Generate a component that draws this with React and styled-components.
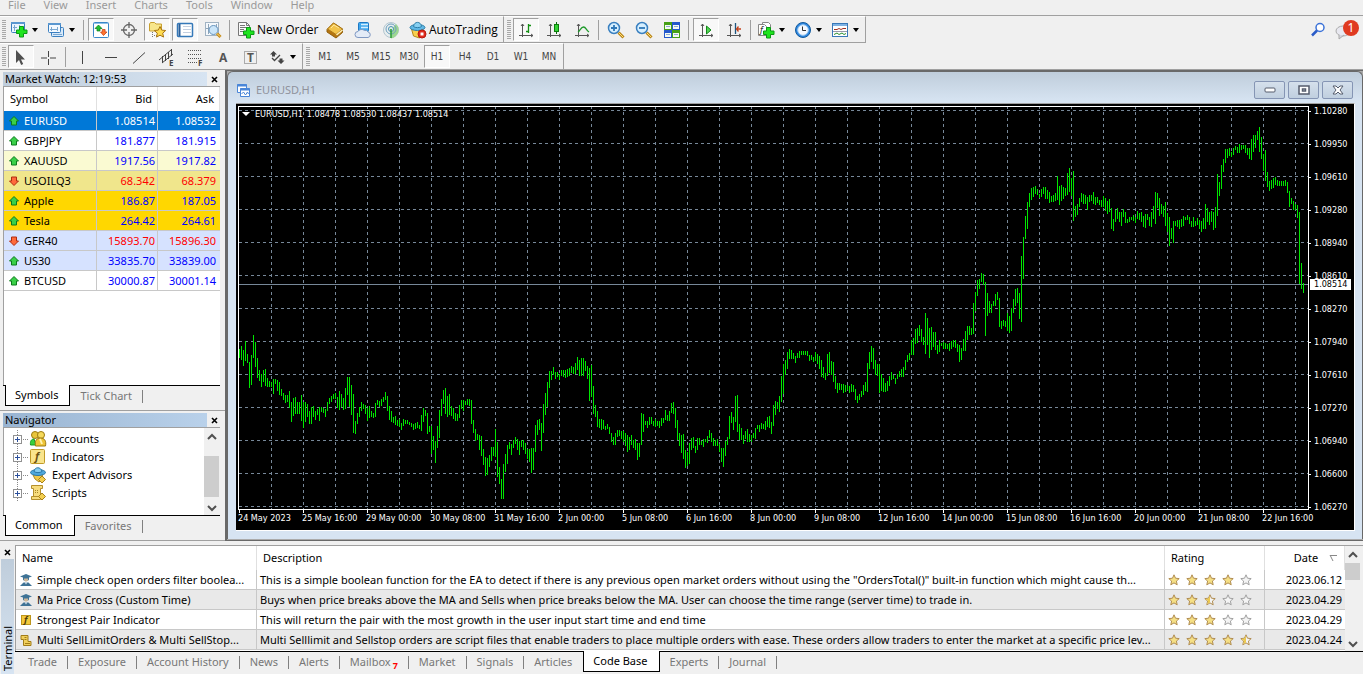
import styled, { createGlobalStyle, css } from "styled-components";

const GlobalStyle = createGlobalStyle`
  *{
    box-sizing: border-box;
  }

  body{
    margin: 0;
    background-color: #f0f0f0;
    color: #000;
    font-family: "Noto Sans", "Open Sans", sans-serif;
    font-size: 11px;
    line-height: 16px;
  }

  button{
    padding: 0;
    border: 0;
    background: none;
    color: inherit;
    font: inherit;
  }

  svg{
    display: block;
    flex: none;
  }
`;

const menus = ['File', 'View', 'Insert', 'Charts', 'Tools', 'Window', 'Help'];
const timeframes = ['M1', 'M5', 'M15', 'M30', 'H1', 'H4', 'D1', 'W1', 'MN'];

const quotes = [
  { symbol: 'EURUSD', bid: '1.08514', ask: '1.08532', up: true, bg: '#0078d7', selected: true },
  { symbol: 'GBPJPY', bid: '181.877', ask: '181.915', up: true, bg: '#ffffff' },
  { symbol: 'XAUUSD', bid: '1917.56', ask: '1917.82', up: true, bg: '#fafad2' },
  { symbol: 'USOILQ3', bid: '68.342', ask: '68.379', up: false, bg: '#f0e68c' },
  { symbol: 'Apple', bid: '186.87', ask: '187.05', up: true, bg: '#ffd700' },
  { symbol: 'Tesla', bid: '264.42', ask: '264.61', up: true, bg: '#ffd700' },
  { symbol: 'GER40', bid: '15893.70', ask: '15896.30', up: false, bg: '#d6e2ff' },
  { symbol: 'US30', bid: '33835.70', ask: '33839.00', up: true, bg: '#d6e2ff' },
  { symbol: 'BTCUSD', bid: '30000.87', ask: '30001.14', up: true, bg: '#ffffff' },
];

const scripts = [
  {
    icon: 'expert', name: 'Simple check open orders filter boolea...', rating: 4, date: '2023.06.12',
    description: 'This is a simple boolean function for the EA to detect if there is any previous open market orders without using the "OrdersTotal()" built-in function which might cause th...',
  },
  {
    icon: 'expert', name: 'Ma Price Cross (Custom Time)', rating: 2.5, date: '2023.04.29',
    description: 'Buys when price breaks above the MA and Sells when price breaks below the MA. User can choose the time range (server time) to trade in.',
  },
  {
    icon: 'indicator', name: 'Strongest Pair Indicator', rating: 3, date: '2023.04.29',
    description: 'This will return the pair with the most growth in the user input start time and end time',
  },
  {
    icon: 'script', name: 'Multi SellLimitOrders & Multi SellStop...', rating: 4.5, date: '2023.04.24',
    description: 'Multi Selllimit and Sellstop orders are script files that enable traders to place multiple orders with ease. These orders allow traders to enter the market at a specific price lev...',
  },
];

const terminalTabs = ['Trade', 'Exposure', 'Account History', 'News', 'Alerts', 'Mailbox', 'Market', 'Signals', 'Articles', 'Code Base', 'Experts', 'Journal'];

const prices = ['1.10280', '1.09950', '1.09610', '1.09280', '1.08940', '1.08610', '1.08270', '1.07940', '1.07610', '1.07270', '1.06940', '1.06600', '1.06270'];

const times = [
  '24 May 2023', '25 May 16:00', '29 May 00:00', '30 May 08:00', '31 May 16:00', '2 Jun 00:00',
  '5 Jun 08:00', '6 Jun 16:00', '8 Jun 00:00', '9 Jun 08:00', '12 Jun 16:00', '14 Jun 00:00',
  '15 Jun 08:00', '16 Jun 16:00', '20 Jun 00:00', '21 Jun 08:00', '22 Jun 16:00',
];

// high/low of every bar, three units to a pixel, counted down from the leg's base
const legs = [
  { base: 214, bars: `87,113 78,120 90,138 63,122 102,128 126,204 105,194 45,113 66,140 114,173 150,183 163,201 150,186 147,197 174,200 183,201
    186,201 177,222 177,192 180,213 186,225 207,228 219,240 225,249 225,246 213,263 246,305 234,288 231,282 246,282 246,282 225,303
    246,324 246,306 252,291 273,312 262,312 258,291 273,300 267,285 262,303 262,276 264,279 267,291 246,273 234,252 228,246 222,237
    219,237 231,264 213,270 222,261 234,270 204,267 171,225 171,261 195,285 222,339 303,342 279,312 261,291 246,273 252,267 255,282
    264,302 258,294 273,291 279,294 249,291 240,255 243,261 237,258 231,246 216,240 228,273 258,300 273,306 291,309 288,315 300,318
    297,321 309,330 297,318 300,312 300,312 306,315 309,321 312,330 309,327 306,324 315,327 285,333 264,306 270,288 279,342 318,336
    318,402 348,390 363,429 318,384 270,354 237,288 210,252 204,282 228,291 222,285 258,288 264,297 279,303 282,302 255,294 240,267
    240,273 243,255 237,255 237,258 240,312 300,339 327,363 342,360 345,390 348,408 387,435 411,468 414,465 405,441 381,423 381,408
    327,411 366,471 441,492 477,537 432,537 402,456 375,432 366,387 372,405 360,384 351,372 357,390 363,405 360,381 360,390 369,402
    387,417 387,426 384,459 384,450 315,396 300,345 297,330 309,393 252,339 219,285 186,261 153,204 153,180 141,165 156,177 156,171
    162,180 150,168 150,171 150,174 147,171 144,168 138,159 141,162 129,162 111,150 120,168 114,168 114,168 123,153 138,177 144,243
    135,231 198,282 255,291 273,321 297,324 297,330 300,327 318,330 312,327 321,342 339,366 351,375 339,375 330,351 330,348 333,357
    333,366 339,378 345,396 351,390 345,375 360,384 357,390 369,420 369,411 279,375 282,336 303,315 303,324 291,315 291,312 303,318
    297,321 303,318 303,324 294,318 294,309 270,300 285,303 273,303 249,279 246,282 264,324 300,360 339,378 345,400 342,417 390,444
    396,438 369,432 354,390 351,384 378,399 354,390 354,375 363,375 357,381 357,366 348,369 330,354 339,366 354,378 360,378 357,378
    372,396 384,426 384,441 363,408 351,375 288,357 276,309 291,330 228,306 225,336 312,360 324,360 345,372 333,357 327,366 342,366
    345,366 339,354 324,357 315,327 315,336 309,327 312,327 303,330 291,321 288,324 306,342 255,318 243,285 246,267 228,276 168,246
    132,222 120,165 96,147 87,117 90,117 99,117 108,129 99,114 93,114 93,105 93,105 93,105 93,108 105,123 105,120 111,126
    96,123 102,132 108,147 120,171 141,174 159,180 102,168 96,159 123,165 126,186 168,207 189,219 189,210 192,210 192,219 195,216
    195,210 198,219 192,216 195,216 207,240 228,249 222,240 213,231 195,225 186,213 129,216 96,147 78,126 84,147 120,165 132,168
    132,219 162,213 174,216 189,216 183,213 168,198 156,180 165,177 174,192 162,177 153,171 147,171 141,171 120,150 105,126 99,120` },
  { base: 144, bars: `270,315 264,315 237,282 234,279 225,258 237,276 261,285 189,312 204,285 234,324 231,300 246,291 246,300 285,312 270,306 279,288
    276,297 279,297 282,297 279,303 273,297 270,291 270,294 282,306 285,336 294,330 267,303 243,303 228,270 228,255 234,255 159,252
    126,183 90,138 87,117 69,96 72,105 96,258 129,198 153,189 162,189 153,168 132,168 126,150 144,231 213,237 210,228 213,231
    189,243 198,249 174,243 147,189 117,168 114,159 129,207 18,216` },
  { base: -2, bars: `399,525 336,405 294,375 267,309 252,288 249,279 246,270 255,273 270,282 255,279 249,270 249,285 258,285 264,297 276,294 273,294
    267,291 216,288 246,303 243,291 249,285 252,276 207,273 192,264 222,276 201,351 306,339 300,333 282,309 267,294 270,300 273,300
    279,318 273,294 273,291 264,300 279,303 279,297 288,303 288,309 276,309 282,321 291,330 285,324 312,375 345,381 318,354 312,345
    324,354 324,366 315,339 324,357 345,357 339,354 339,348 333,351 339,357 321,345 327,348 324,354 336,369 330,372 330,348 339,366
    324,369 306,345 264,360 267,312 282,336 300,330 306,339 294,366 327,384 339,426 372,405 351,417 351,366 348,369 348,375 345,369
    336,366 339,348 333,348 339,360 351,369 339,369 351,366 342,363 348,375 351,384 342,375 300,375 312,354 324,363 321,354 324,378
    309,372 210,336 234,276 183,255 165,204 135,177 135,162 132,156 144,159 132,153 126,138 129,147 120,147 123,138 123,135 123,147
    132,153 132,165 105,168 93,144 93,132 81,108 69,144 99,165 150,201 138,231 204,249 231,261 228,255 222,252 219,243 228,246
    231,246 231,246 231,246 228,246 234,267 261,309 282,300 291,318 300,318 303,342 324,540 477,555 537,567` },
];

const barPath = legs
  .flatMap(({ base, bars }) => bars.trim().split(/\s+/).map(pair => pair.split(',').map(v => base + Math.round(v / 3))))
  .map(([high, low], i) => `M${i * 2 + 1} ${high}h1V${low}h-1z`)
  .join('');

const gridColumns = times.flatMap((_, i) => [33 + i * 64, 65 + i * 64]);

const Svg = ({ size = 18, children, ...rest }) => (
  <svg width={size} height={size} viewBox={`0 0 ${size} ${size}`} fill="none" aria-hidden="true" {...rest}>{children}</svg>
);

const GreenPlus = ({ x, y }) => (
  <path transform={`translate(${x} ${y})`} d="M3.500.5h4v3.500h3.500v3.500H7.500v3.500h-4V7.500H.5V4h3z" fill="#1fe41f" stroke="#0a9a14" />
);

const Axes = () => (
  <path d="M5.500 3v13M2 14.500h14M4 5l1.500-2L7 5M14 13l2 1.500-2 1.500" stroke="#555" />
);

const icons = {
  newChart: (
    <>
      <rect x="1.500" y="1.500" width="13" height="10" rx="1" fill="#eaf4ff" stroke="#3a7fc0" />
      <path d="M1 2h14" stroke="#5a97d0" strokeWidth="2" />
      <path d="M4.500 4v6M3 6.500h4M9.500 4v3" stroke="#7aa7d0" />
      <GreenPlus x={6} y={5} />
    </>
  ),
  profiles: (
    <>
      <rect x="4.500" y="6.500" width="12" height="9" rx="1" fill="#d8eafa" stroke="#3a7fc0" />
      <rect x="1.500" y="2.500" width="12" height="9" rx="1" fill="#f3f9ff" stroke="#3a7fc0" />
      <path d="M1 3h13" stroke="#5a97d0" strokeWidth="2" />
      <path d="M4.500 6v4M3 8.500h8M10.500 6v4" stroke="#7aa7d0" />
      <path d="M6 13.500h9" stroke="#7aa7d0" />
    </>
  ),
  marketWatch: (
    <>
      <rect x="1.500" y="1.500" width="15" height="15" rx="1" fill="#fff" stroke="#3a86c8" />
      <path d="M2 2.500h14" stroke="#8fc0ea" />
      <path d="M6.500 4L10 7.500H8V10H5V7.500H3z" fill="#22c032" stroke="#0a7a1a" strokeWidth=".7" />
      <path d="M11.500 14.500L8.500 11h1.800V8.500h2.800V11H15z" fill="#ff7430" stroke="#c03a10" strokeWidth=".7" />
    </>
  ),
  crosshair: (
    <>
      <circle cx="9" cy="9" r="5.500" stroke="#666" strokeWidth="1.300" />
      <path d="M9 1v6M9 11v6M1 9h6M11 9h6" stroke="#666" strokeWidth="1.300" />
    </>
  ),
  navigator: (
    <>
      <path d="M1.500 3l1-1.500h4L8 3h5.500v7h-12z" fill="#f8e68c" stroke="#c8a030" />
      <path d="M4.500 11v6M6 14.500h3" stroke="#777" strokeDasharray="1 1" />
      <path d="M12 5.500l1.700 3.600 4 .4-3 2.700.9 3.900L12 14.200 8.500 16.100l.8-3.900-3-2.700 4-.4z" fill="#ffdc50" stroke="#a87412" />
    </>
  ),
  terminal: (
    <>
      <rect x="1.500" y="2.500" width="15" height="13" rx="1" fill="#fff" stroke="#3478b8" strokeWidth="1.500" />
      <path d="M3.500 3v12" stroke="#2a5e98" strokeWidth="2" />
      <path d="M7 5.500h8M7 8.500h8M7 11.500h8" stroke="#c3cfe0" />
    </>
  ),
  tester: (
    <>
      <rect x="1.500" y="1.500" width="13" height="13" fill="#f4f8fc" stroke="#a0b2c2" />
      <path d="M4.500 3v10M2 7.500h4M12.500 3v4" stroke="#8fa5b8" />
      <circle cx="9.500" cy="9" r="4.500" fill="#bfe0f8" fillOpacity=".8" stroke="#6593bd" />
      <path d="M13 12.500l3.500 3.500" stroke="#c58a18" strokeWidth="3" />
      <path d="M13 12.500l3 3" stroke="#ffe07a" />
    </>
  ),
  newOrder: (
    <>
      <path d="M1.500 1.500h8l3 3v10h-11z" fill="#fafafa" stroke="#777" />
      <path d="M9.500 1.500v3h3M3 4.500h5M3 6.500h7M3 8.500h4M3 10.500h3" stroke="#777" />
      <GreenPlus x={6} y={6} />
    </>
  ),
  metaEditor: (
    <>
      <path d="M1 8.500L7.500 2 16.500 8v3.500L10 17 1 11z" fill="#b57510" stroke="#91600c" />
      <path d="M1.500 8L7.500 2l9 6-6.500 5.500z" fill="#f2c44c" stroke="#ad7818" />
      <path d="M10.500 14l6-5" stroke="#fff1b8" strokeWidth="1.500" />
      <path d="M5 7l3-3 5 3" stroke="#ffe69a" />
    </>
  ),
  hosting: (
    <>
      <rect x="4.500" y="1.500" width="10" height="9" rx="1" fill="#3fa8ee" stroke="#1e78c4" />
      <path d="M7 3.500h7M7 6.500h7" stroke="#d5eeff" strokeWidth="1.500" />
      <path d="M4 16.500a3 3 0 0 1 0-6 4 3.500 0 0 1 6.500-1 3 3 0 0 1 3.500 1.500 2.800 2.800 0 0 1 0 5.500z" fill="#e3ebf7" stroke="#7f98c2" />
    </>
  ),
  signals: (
    <>
      <circle cx="9" cy="9" r="7.500" fill="#e8eeee" stroke="#b4c6d0" />
      <path d="M9 9v8.500a8 8 0 0 0 5-2.500 8 8 0 0 0 0-12z" fill="#9cd692" />
      <circle cx="9" cy="8" r="5" stroke="#6e9fc0" />
      <circle cx="9" cy="8" r="2.500" fill="#d8f0e0" stroke="#4f8fb8" />
      <path d="M9 8v9" stroke="#2f9e3a" strokeWidth="1.600" />
    </>
  ),
  autoTrading: (
    <>
      <path d="M2.500 8l2 7 6 2 5-6-2-3z" fill="#f7cf4d" stroke="#b58718" />
      <ellipse cx="8.500" cy="6.500" rx="7.500" ry="3" fill="#5fb8e6" stroke="#2b7da8" />
      <path d="M4.500 5.500C5 0 12 0 12.500 5.500 11 7 6 7 4.500 5.500z" fill="#87d0f2" stroke="#2b7da8" />
      <circle cx="13" cy="13" r="4" fill="#e02a1c" stroke="#b9180c" />
      <path d="M11.500 11.500h3v3h-3z" fill="#fff" />
    </>
  ),
  bars: <><Axes /><path d="M11.500 3v9M11.500 4.500H14M9 10.500h2.500" stroke="#149014" strokeWidth="1.300" /></>,
  candles: <><Axes /><path d="M11.500 1v12" stroke="#0c6c0c" /><rect x="9.500" y="3.500" width="4" height="7" fill="#34d334" stroke="#0c7c0c" /></>,
  line: <><Axes /><path d="M5 11c2-1 3-5 5.500-5S13 9 16 11" stroke="#1e9a2a" strokeWidth="1.300" /></>,
  zoomIn: (
    <>
      <path d="M11.500 11.500l5 5" stroke="#b98518" strokeWidth="3" />
      <path d="M12 12l4 4" stroke="#ffe27a" />
      <circle cx="7" cy="7" r="5.500" fill="#d6efff" stroke="#3a80c0" strokeWidth="1.500" />
      <path d="M4 7h6M7 4v6" stroke="#2f78b8" strokeWidth="1.800" />
    </>
  ),
  zoomOut: (
    <>
      <path d="M11.500 11.500l5 5" stroke="#b98518" strokeWidth="3" />
      <path d="M12 12l4 4" stroke="#ffe27a" />
      <circle cx="7" cy="7" r="5.500" fill="#d6efff" stroke="#3a80c0" strokeWidth="1.500" />
      <path d="M4 7h6" stroke="#2f78b8" strokeWidth="1.800" />
    </>
  ),
  tile: (
    <>
      <path d="M1 1h8v8H1zM9 9h8v8H9z" fill="#46a016" />
      <path d="M9 1h8v8H9zM1 9h8v8H1z" fill="#2458cc" />
      <path d="M2 4h6v4H2zM10 4h6v4h-6zM2 12h6v4H2zM10 12h6v4h-6z" fill="#f4faf2" />
      <path d="M3 5.500h4M11 5.500h4M3 13.500h4M11 13.500h4" stroke="#8fa9d0" />
    </>
  ),
  autoScroll: <><Axes /><path d="M9.500 5v8l4.500-4z" fill="#52d452" stroke="#128a1a" /></>,
  chartShift: <><Axes /><path d="M10.500 2v11" stroke="#1c5680" strokeWidth="1.300" /><path d="M16 8h-4M13.500 5.500L11.500 8l2 2.500" stroke="#c4421c" strokeWidth="1.300" /></>,
  indicators: (
    <>
      <path d="M5.500 1.500h6l2 2v9h-8z" fill="#fff" stroke="#888" />
      <path d="M1.500 3.500h6l2 2v9h-8z" fill="#fff" stroke="#888" />
      <text x="3" y="12" fontSize="9" fontStyle="italic" fill="#333">f</text>
      <GreenPlus x={6} y={6} />
    </>
  ),
  periods: (
    <>
      <circle cx="9" cy="9" r="7.500" fill="#2c86e0" stroke="#135a9c" />
      <circle cx="9" cy="9" r="5.300" fill="#f4f9ff" stroke="#9cc8f0" />
      <path d="M8.500 5.500v4H12" stroke="#333" />
    </>
  ),
  templates: (
    <>
      <rect x="1.500" y="2.500" width="15" height="13" fill="#fff" stroke="#3878b8" />
      <path d="M2 4h14" stroke="#7db2e4" strokeWidth="2" />
      <path d="M3 8.500h3l2-1 2 1 2-1h3" stroke="#a03020" />
      <path d="M2 10.500h14" stroke="#99a" />
      <path d="M3 13.500l3-1.500 2 1.500 3-1.500 2 1.500 2-1" stroke="#2a9030" />
    </>
  ),
  cursor: <path d="M4 2v13l3-3 2.200 5 2-1-2.200-4.500H13z" fill="#505050" />,
  cross: <path d="M8.500 3v6M8.500 11v6M1 10h6M10 10h6" stroke="#444" />,
  vline: <path d="M8.500 3v13" stroke="#444" />,
  hline: <path d="M3 9.500h12" stroke="#444" />,
  trend: <path d="M3 15.500L15 4.500" stroke="#444" />,
  channel: (
    <>
      <path d="M1 12L13 2M4 15L15 6M4.500 8v7M7.500 6v7M10.500 4v7M13.500 1v7" stroke="#444" />
      <text x="11" y="18" fontSize="8" fontWeight="700" fill="#444">E</text>
    </>
  ),
  fibo: (
    <>
      <path d="M2 2.500h14M2 6.500h14M2 10.500h14M2 14.500h9" stroke="#555" strokeDasharray="1 1" />
      <text x="12" y="18" fontSize="8" fontWeight="700" fill="#444">F</text>
    </>
  ),
  text: <text x="5" y="14" fontSize="12" fontWeight="700" fill="#555">A</text>,
  label: (
    <>
      <rect x="2.500" y="3.500" width="12" height="12" stroke="#666" strokeDasharray="1 1" />
      <text x="5" y="14" fontSize="12" fontWeight="700" fill="#555">T</text>
    </>
  ),
  arrows: (
    <>
      <path d="M5.500 3L9 6.500H7v2H4v-2H2zM13 16l-3.500-3.500h2v-2h3v2h2z" fill="#444" />
      <path d="M4 10l2.500 2.500L12 7" stroke="#444" strokeWidth="1.300" />
    </>
  ),
  accounts: (
    <>
      <circle cx="6" cy="5" r="3.500" fill="#e8c53a" stroke="#9c7a10" />
      <circle cx="12" cy="5" r="3.500" fill="#f5d95a" stroke="#9c7a10" />
      <path d="M1.500 15c-.5-4 1-6 3.500-6l2 6z" fill="#38d03c" stroke="#169a20" />
      <path d="M6.500 16c-1-5 1-8 5-8s6 3 5 8z" fill="#eec436" stroke="#9c7a10" />
      <path d="M11 9l2 5" stroke="#fff3b0" strokeWidth="2" />
    </>
  ),
  indicator: (
    <>
      <rect x="1.500" y="1.500" width="14" height="14" rx="1" fill="#f9e48c" stroke="#c09a28" />
      <text x="6" y="12" fontSize="11" fontStyle="italic" fontWeight="700" fill="#6c5210">f</text>
    </>
  ),
  expertAdvisor: (
    <>
      <path d="M4 9l2 4 4 3 4-4-1-4z" fill="#f0c84a" stroke="#b08a20" />
      <ellipse cx="9" cy="6.500" rx="7.500" ry="3" fill="#4fa8dc" stroke="#2b78a8" />
      <path d="M5 5.500C5.500.500 12 .5 13 5.500 11 7 7 7 5 5.500z" fill="#84ccf0" stroke="#2b78a8" />
      <path d="M13 10l3.500 3.500L13 17l-3.500-3.500z" fill="#f3cf50" stroke="#a98018" />
    </>
  ),
  scriptRoll: (
    <>
      <path d="M2.500 1.500h11v3h-2v8H4.500v-8h-2zM2.500 12.500h9v3h-9z" fill="#f7dc7c" stroke="#b5902c" />
      <path d="M6 6.500h4M6 8.500h4" stroke="#a5862c" strokeDasharray="1 1" />
      <path d="M13 9l3.500 3.500L13 16l-3.500-3.500z" fill="#f3cf50" stroke="#a98018" />
    </>
  ),
  search: (
    <>
      <circle cx="11" cy="6.500" r="4" fill="#fff" stroke="#3b72d8" strokeWidth="1.500" />
      <path d="M8 9.500L3 14.500" stroke="#2a5cc8" strokeWidth="2.500" />
    </>
  ),
};

const smallIcons = {
  expert: (
    <>
      <path d="M1 3.500L7 1l6 2.500-3 1v2c-1 2-5 2-6 0v-2z" fill="#3f7396" />
      <path d="M5 5.500h4v2c-1 1.500-3 1.500-4 0z" fill="#cfb89a" />
      <path d="M4.500 9.500h5L13 13H1z" fill="#3f7396" />
      <path d="M6 9.500h2l-1 2z" fill="#fff" />
    </>
  ),
  indicator: (
    <>
      <rect x="2.500" y="2.500" width="9" height="9" fill="#f3c93c" stroke="#bd951c" />
      <text x="5" y="10" fontSize="9" fontWeight="700" fontStyle="italic" fill="#503c08">f</text>
    </>
  ),
  script: (
    <>
      <path d="M2 2.500h7v6h3v4H4.500v-6H2z" fill="#f0cf5c" stroke="#a27c18" />
      <path d="M5.500 4.500h2M5.500 6.500h2M6 10.500h5" stroke="#a27c18" />
    </>
  ),
};

const IconButton = ({ name, label, pressed }) => (
  <ToolButton aria-label={label} aria-pressed={pressed} $pressed={pressed}>
    <Svg>{icons[name]}</Svg>
  </ToolButton>
);

const DropButton = ({ name, label }) => (
  <MenuToolButton aria-label={label}>
    <Svg>{icons[name]}</Svg>
    <svg width="7" height="4"><path d="M0 0h6L3 4z" fill="#000" /></svg>
  </MenuToolButton>
);

const CloseButton = ({ label }) => (
  <Close aria-label={label}>
    <svg width="7" height="7"><path d="M1 1l5 5M6 1L1 6" stroke="#000" strokeWidth="1.600" /></svg>
  </Close>
);

const Toolbars = () => (
  <>
    <ToolbarRow>
      <ToolGroup>
        <Grip />
        <DropButton name="newChart" label="New chart" />
        <DropButton name="profiles" label="Profiles" />
        <Separator />
        <IconButton name="marketWatch" label="Market Watch" pressed />
        <IconButton name="crosshair" label="Data window" />
        <IconButton name="navigator" label="Navigator" pressed />
        <IconButton name="terminal" label="Terminal" pressed />
        <IconButton name="tester" label="Strategy tester" />
        <Separator />
        <TextButton $width={88}><Svg>{icons.newOrder}</Svg>New Order</TextButton>
        <IconButton name="metaEditor" label="MetaEditor" />
        <IconButton name="hosting" label="Virtual hosting" />
        <IconButton name="signals" label="Signals" />
        <TextButton $width={98}><Svg>{icons.autoTrading}</Svg>AutoTrading</TextButton>
      </ToolGroup>
      <ToolGroup>
        <Grip />
        <IconButton name="bars" label="Bar chart" pressed />
        <IconButton name="candles" label="Candlesticks" />
        <IconButton name="line" label="Line chart" />
        <Separator />
        <IconButton name="zoomIn" label="Zoom in" />
        <IconButton name="zoomOut" label="Zoom out" />
        <IconButton name="tile" label="Tile windows" />
        <Separator />
        <IconButton name="autoScroll" label="Auto scroll" pressed />
        <IconButton name="chartShift" label="Chart shift" />
        <Separator />
        <DropButton name="indicators" label="Indicators" />
        <DropButton name="periods" label="Periods" />
        <DropButton name="templates" label="Templates" />
      </ToolGroup>
      <ToolbarEnd>
        <button aria-label="Search"><Svg>{icons.search}</Svg></button>
        <ChatButton aria-label="Messages">
          <svg width="20" height="20">
            <ellipse cx="8" cy="11" rx="7" ry="5" fill="#e8e8f0" stroke="#aaa" />
            <path d="M4 15v4l5-4" fill="#d4d4dc" stroke="#aaa" />
          </svg>
          <Badge>1</Badge>
        </ChatButton>
      </ToolbarEnd>
    </ToolbarRow>
    <ToolbarRow $last>
      <ToolGroup>
        <Grip />
        <IconButton name="cursor" label="Cursor" pressed />
        <IconButton name="cross" label="Crosshair" />
        <Separator />
        <IconButton name="vline" label="Vertical line" />
        <IconButton name="hline" label="Horizontal line" />
        <IconButton name="trend" label="Trendline" />
        <IconButton name="channel" label="Equidistant channel" />
        <IconButton name="fibo" label="Fibonacci retracement" />
        <IconButton name="text" label="Text" />
        <IconButton name="label" label="Text label" />
        <DropButton name="arrows" label="Arrows" />
      </ToolGroup>
      <ToolGroup>
        <Grip />
        {timeframes.map(t => (
          <TimeframeButton key={t} $pressed={t === 'H1'}>{t}</TimeframeButton>
        ))}
      </ToolGroup>
    </ToolbarRow>
  </>
);

const Arrow = ({ up }) => (
  <svg width="12" height="12" viewBox="0 0 12 12">
    <path
      d="M6 1.500l4.500 4.500H8.500v4h-5V6h-2z"
      transform={up ? undefined : 'rotate(180 6 6)'}
      fill={up ? '#3ad048' : '#ff6a3c'}
      stroke={up ? '#0c7a1c' : '#b02c10'}
    />
  </svg>
);

const MarketWatch = () => (
  <Panel $grow>
    <PanelTitle><span>Market Watch: 12:19:53</span><CloseButton label="Close Market Watch" /></PanelTitle>
    <PanelBody>
      <QuoteTable>
        <colgroup><col width="93" /><col width="61" /><col /></colgroup>
        <thead>
          <tr><th>Symbol</th><th>Bid</th><th>Ask</th></tr>
        </thead>
        <tbody>
          {quotes.map(q => (
            <QuoteRow key={q.symbol} $bg={q.bg} $up={q.up} $selected={q.selected}>
              <td><SymbolName><Arrow up={q.up} />{q.symbol}</SymbolName></td>
              <td>{q.bid}</td>
              <td>{q.ask}</td>
            </QuoteRow>
          ))}
        </tbody>
      </QuoteTable>
    </PanelBody>
    <Tabs>
      <Tab $active>Symbols</Tab>
      <Tab>Tick Chart</Tab>
    </Tabs>
  </Panel>
);

const ScrollArrow = ({ down }) => (
  <button aria-label={down ? 'Scroll down' : 'Scroll up'}>
    <svg width="15" height="15"><path d={down ? 'M4 6l4 4 4-4' : 'M4 10l4-4 4 4'} fill="none" stroke="#505050" strokeWidth="2" /></svg>
  </button>
);

const tree = [
  ['Accounts', 'accounts'],
  ['Indicators', 'indicator'],
  ['Expert Advisors', 'expertAdvisor'],
  ['Scripts', 'scriptRoll'],
];

const Navigator = () => (
  <Panel>
    <PanelTitle $active><span>Navigator</span><CloseButton label="Close Navigator" /></PanelTitle>
    <PanelBody>
      <Tree>
        {tree.map(([name, icon]) => (
          <TreeItem key={name}>
            <svg width="21" height="18" fill="none" shapeRendering="crispEdges">
              <path d="M9.500 0v18M15 9.500h6" stroke="#888" strokeDasharray="1 1" />
              <rect x="5.500" y="5.500" width="8" height="8" fill="#fff" stroke="#919191" />
              <path d="M7 9.500h5M9.500 7v5" stroke="#2b4f9c" />
            </svg>
            <Svg>{icons[icon]}</Svg>
            {name}
          </TreeItem>
        ))}
      </Tree>
      <Scrollbar $width={16} $thumbTop={12} $thumb={41}><ScrollArrow /><span /><ScrollArrow down /></Scrollbar>
    </PanelBody>
    <Tabs>
      <Tab $active>Common</Tab>
      <Tab>Favorites</Tab>
    </Tabs>
  </Panel>
);

const ChartWindow = () => (
  <Mdi>
    <Window>
      <WindowTitle>
        <svg width="15" height="15" fill="none" stroke="#4a86d8">
          <path d="M1.500 1.500h9v8h-9z" fill="#fff" />
          <path d="M1 2.500h10" strokeWidth="2" />
          <path d="M4.500 5.500h9v8h-9z" fill="#fff" />
          <path d="M4 6.500h10" strokeWidth="2" />
          <path d="M5.500 11l2-2 2 3 2-3 1 2" />
        </svg>
        <h1>EURUSD,H1</h1>
        <WindowButton aria-label="Minimize"><svg width="12" height="6"><rect x="1" y="1" width="10" height="4" rx="1" fill="#fff" stroke="#555c6c" /></svg></WindowButton>
        <WindowButton aria-label="Restore"><svg width="12" height="10"><path d="M1 1h10v8H1zM4.500 4h3v2h-3z" fill="#fff" stroke="#555c6c" strokeWidth="1.500" /></svg></WindowButton>
        <WindowButton aria-label="Close"><svg width="12" height="10"><path d="M1 1h3l2 2 2-2h3L8 5l3 4H8L6 7 4 9H1l3-4z" fill="#fff" stroke="#555c6c" /></svg></WindowButton>
      </WindowTitle>
      <Chart>
        <Plot>
          <svg width="100%" height="100%" shapeRendering="crispEdges">
            <g stroke="#778899" strokeDasharray="3 3">
              {prices.map((p, i) => <line key={p} x1="1" x2="100%" y1={i * 33 + 4.5} y2={i * 33 + 4.5} />)}
              {gridColumns.map(x => <line key={x} x1={x + 0.5} x2={x + 0.5} y1="0" y2="404" />)}
            </g>
            <rect y="178" width="100%" height="1" fill="#778899" />
            <path d={barPath} fill="#00e600" />
          </svg>
          <ChartCaption>
            <svg width="9" height="5"><path d="M0 0h8L4 4z" fill="#fff" /></svg>
            <span>EURUSD,H1</span>
            <span>1.08478 1.08530 1.08437 1.08514</span>
          </ChartCaption>
        </Plot>
        <PriceAxis>
          {prices.map(p => <span key={p}>{p}</span>)}
          <CurrentPrice>1.08514</CurrentPrice>
        </PriceAxis>
        <TimeAxis>
          {times.map(t => <span key={t}>{t}</span>)}
        </TimeAxis>
      </Chart>
    </Window>
  </Mdi>
);

const Star = ({ fill }) => (
  <Svg size={12}>
    <path d="M6 .8l1.500 3.400 3.700.4-2.800 2.500.8 3.700L6 8.900l-3.200 1.900.8-3.700L.8 4.600l3.700-.4z" fill={fill === 1 ? '#f5df84' : '#f4f4f4'} stroke={fill > 0 ? '#b08c50' : '#a0a0a0'} />
    {fill === 0.5 && <path d="M6 1.500v7L3.300 10l.7-3L1.500 5l3-.4z" fill="#ecc94e" />}
  </Svg>
);

const Terminal = () => (
  <TerminalPanel>
    <TerminalSide>
      <CloseButton label="Close Terminal" />
      <h2>Terminal</h2>
    </TerminalSide>
    <TerminalMain>
      <TerminalBody>
        <CodeTable>
          <colgroup><col width="241" /><col /><col width="100" /><col width="80" /></colgroup>
          <thead>
            <tr>
              <th>Name</th>
              <th>Description</th>
              <th>Rating</th>
              <th>Date <svg width="9" height="8"><path d="M1 1.500h7M1 1l3 6" fill="none" stroke="#888" /></svg></th>
            </tr>
          </thead>
          <tbody>
            {scripts.map(s => (
              <tr key={s.name}>
                <td><ScriptName><Svg size={14}>{smallIcons[s.icon]}</Svg>{s.name}</ScriptName></td>
                <td>{s.description}</td>
                <td>
                  <Stars aria-label={`${s.rating} of 5`}>
                    {[0, 1, 2, 3, 4].map(i => <Star key={i} fill={Math.max(0, Math.min(1, s.rating - i))} />)}
                  </Stars>
                </td>
                <td>{s.date}</td>
              </tr>
            ))}
          </tbody>
        </CodeTable>
        <Scrollbar $width={18} $thumbTop={1} $thumb={17}><ScrollArrow /><span /><ScrollArrow down /></Scrollbar>
      </TerminalBody>
      <Tabs $tall>
        {terminalTabs.map(t => (
          <Tab key={t} $active={t === 'Code Base'} $beforeActive={t === 'Articles'}>
            {t}{t === 'Mailbox' && <sub>7</sub>}
          </Tab>
        ))}
      </Tabs>
    </TerminalMain>
  </TerminalPanel>
);

const App = () => (
  <>
    <GlobalStyle />
    <Shell>
      <MenuBar>{menus.map(m => <button key={m}>{m}</button>)}</MenuBar>
      <Toolbars />
      <Workspace>
        <Sidebar>
          <MarketWatch />
          <Navigator />
        </Sidebar>
        <ChartWindow />
      </Workspace>
      <Terminal />
    </Shell>
  </>
);

const Shell = styled.div`
  display: flex;
  flex-direction: column;
  min-height: 100vh;
`;

const MenuBar = styled.nav`
  display: flex;
  gap: 18px;
  height: 16px;
  padding-left: 8px;
  border-bottom: 1px solid #a0a0a0;
  color: #9a9a9a;
  line-height: 10px;

  button{
    height: 10px;
  }
`;

const ToolbarRow = styled.div`
  display: flex;
  height: 27px;

  ${props => props.$last && css`
    border-bottom: 1px solid #a0a0a0;

    & > div{
      border-bottom: 0;
    }
  `}
`;

const ToolGroup = styled.div`
  display: flex;
  align-items: center;
  border: solid #a0a0a0;
  border-width: 0 1px 1px 0;
  border-top: 1px solid #fff;

  & + &{
    padding-left: 1px;
  }
`;

const Grip = styled.span`
  width: 7px;
  height: 20px;
  border: solid #f0f0f0;
  border-width: 0 1px 0 2px;
  background: repeating-linear-gradient(#a8a8a8 0 1px, #f0f0f0 1px 2px);
`;

const Separator = styled.span`
  width: 6px;
  height: 20px;
  border-right: 3px solid #f0f0f0;
  background: linear-gradient(to right, #f0f0f0 2px, #a0a0a0 2px);
`;

const pressedStyle = css`
  background-color: #f8f8f8;
  border-color: #a0a0a0 #fff #fff #a0a0a0;
`;

const ToolButton = styled.button`
  display: flex;
  align-items: center;
  justify-content: center;
  width: 26px;
  height: 23px;
  margin: 0 1px;
  border: 1px solid transparent;
  ${props => props.$pressed && pressedStyle}
`;

const TimeframeButton = styled(ToolButton)`
  color: #444;
  font-family: "DejaVu Sans Condensed", "DejaVu Sans", sans-serif;
  font-size: 10px;
`;

const MenuToolButton = styled.button`
  display: flex;
  align-items: center;
  gap: 4px;
  width: 37px;
  padding-left: 3px;
`;

const TextButton = styled.button`
  display: flex;
  align-items: center;
  gap: 2px;
  width: ${props => props.$width}px;
  padding-left: 4px;
  font-family: "Open Sans", sans-serif;
  font-size: 12px;
  white-space: nowrap;
`;

const ToolbarEnd = styled.div`
  display: flex;
  align-items: center;
  gap: 8px;
  margin-left: auto;
  padding-right: 4px;
`;

const ChatButton = styled.button`
  position: relative;
  width: 24px;
`;

const Badge = styled.span`
  position: absolute;
  top: 0;
  right: 0;
  width: 16px;
  height: 16px;
  border-radius: 50%;
  background-color: #e03a20;
  color: #fff;
  font-size: 12px;
  text-align: center;
`;

const Workspace = styled.main`
  display: flex;
  flex: 1;
`;

const Sidebar = styled.aside`
  display: flex;
  flex-direction: column;
  flex: none;
  width: 225px;
  border-bottom: 1px solid #a0a0a0;
`;

const Panel = styled.section`
  display: flex;
  flex-direction: column;
  padding: 2px 5px 4px 3px;
  ${props => props.$grow ? css`flex: 1;` : css`border-top: 1px solid #a0a0a0;`}
`;

const PanelTitle = styled.header`
  display: flex;
  height: 14px;
  margin-right: -1px;
  line-height: 13px;

  span{
    flex: 1;
    padding-left: 2px;
    background: ${props => props.$active
      ? 'linear-gradient(to right, #99b4d1, #b9d1ea)'
      : 'linear-gradient(to right, #bfcddb, #d7e4f2)'};
  }
`;

const Close = styled.button`
  display: grid;
  place-items: center;
  width: 14px;
  height: 14px;
`;

const PanelBody = styled.div`
  display: flex;
  flex: 1;
  min-height: 88px;
  border-top: 1px solid #a0a0a0;
  border-left: 1px solid #a0a0a0;
  background-color: #fff;
`;

const QuoteTable = styled.table`
  align-self: flex-start;
  width: 100%;
  table-layout: fixed;
  border-collapse: separate;
  border-spacing: 0;

  th{
    height: 24px;
    padding: 0 5px 0 6px;
    border-right: 1px solid #e0e0e0;
    font-weight: 400;
    text-align: right;
  }

  th:first-child{
    text-align: left;
  }
`;

const QuoteRow = styled.tr`
  background-color: ${props => props.$bg};
  color: ${props => props.$selected ? '#fff' : props.$up ? '#0000ff' : '#ff0000'};

  td{
    height: 20px;
    padding: 0 2px 0 0;
    border: solid #c8c8c8;
    border-width: 0 1px 1px 0;
    text-align: right;
  }

  td:last-child{
    padding-right: 4px;
    border-right: 0;
  }

  td:first-child{
    color: ${props => props.$selected ? '#fff' : '#000'};
  }
`;

const SymbolName = styled.span`
  display: flex;
  align-items: center;
  gap: 4px;
  padding-left: 4px;
`;

const Tabs = styled.div`
  display: flex;
  height: ${props => props.$tall ? 23 : 21}px;
  border-top: 1px solid #000;
`;

const Tab = styled.button`
  height: 19px;
  padding: 0 11px 0 10px;
  background: linear-gradient(#808080, #808080) right 4px / 1px 13px no-repeat;
  color: #777;
  line-height: 18px;
  text-align: left;
  white-space: nowrap;

  sub{
    margin-left: 2px;
    color: #ff0000;
    font-size: 9px;
    font-weight: 700;
    line-height: 8px;
  }

  &:first-child{
    margin-left: 3px;
  }

  ${props => props.$beforeActive && css`background: none;`}

  ${props => props.$active && css`
    height: 21px;
    margin-top: -1px;
    padding: 0 11px 0 9px;
    border: solid #000;
    border-width: 0 1px 1px;
    background: #fff;
    color: #000;

    &:first-child{
      margin-left: 2px;
    }
  `}
`;

const Tree = styled.ul`
  flex: 1;
  margin: 0;
  padding: 2px 0 0 4px;
  list-style: none;
`;

const TreeItem = styled.li`
  display: flex;
  align-items: center;
  height: 18px;

  svg:last-of-type{
    margin-right: 5px;
  }
`;

const Scrollbar = styled.div`
  display: flex;
  flex-direction: column;
  align-items: flex-start;
  flex: none;
  width: ${props => props.$width}px;
  padding-top: 1px;
  background-color: #f0f0f0;

  span{
    flex: none;
    width: 15px;
    height: ${props => props.$thumb}px;
    margin: ${props => props.$thumbTop}px 0 auto;
    background-color: #cdcdcd;
  }
`;

const Mdi = styled.div`
  flex: 1;
  min-width: 0;
  border: solid #696969;
  border-width: 1px 0 1px 2px;
  background-color: #ababab;
`;

const Window = styled.section`
  padding: 0 7px 8px 8px;
  border: 1px solid #696969;
  border-width: 1px 1px 0;
  border-radius: 6px 6px 0 0;
  background: linear-gradient(#bfcddb, #d7e4f2 30px);
`;

const WindowTitle = styled.header`
  display: flex;
  align-items: center;
  gap: 3px;
  height: 31px;
  padding: 5px 2px 0 0;

  h1{
    flex: 1;
    margin: 0;
    padding-left: 2px;
    color: #8f929c;
    font-size: 11px;
    font-weight: 400;
  }
`;

const WindowButton = styled.button`
  display: grid;
  place-items: center;
  width: 31px;
  height: 18px;
  border: 1px solid #8595b4;
  border-radius: 2px;
  background: linear-gradient(#d5e0ec, #c0cfdf);
`;

const Chart = styled.div`
  display: grid;
  grid-template-columns: 1fr 45px;
  padding: 2px 0 0 2px;
  border-top: 1px solid #a0a0a0;
  border-right: 1px solid #fff;
  border-bottom: 1px solid #fff;
  background-color: #000;
  color: #fff;
  font-family: "DejaVu Sans Condensed", "DejaVu Sans", sans-serif;
  font-size: 9px;
  line-height: 11px;
`;

const Plot = styled.div`
  position: relative;
  height: 404px;

  &::after{
    content: "";
    position: absolute;
    inset: 0;
    border: 1px solid #fff;
  }
`;

const ChartCaption = styled.p`
  position: absolute;
  top: 3px;
  left: 4px;
  display: flex;
  align-items: center;
  gap: 4px;
  margin: 0;
  white-space: nowrap;
`;

const PriceAxis = styled.div`
  position: relative;
  height: 404px;

  span{
    display: flex;
    align-items: center;
    gap: 3px;
    height: 11px;
    margin-bottom: 22px;
  }

  span::before{
    content: "";
    width: 2px;
    height: 1px;
    background-color: #fff;
  }
`;

const CurrentPrice = styled.strong`
  position: absolute;
  top: 173px;
  left: 1px;
  width: 41px;
  padding-left: 4px;
  background-color: #fff;
  color: #000;
  font-weight: 400;
`;

const TimeAxis = styled.div`
  display: flex;
  grid-column: 1 / -1;
  height: 20px;
  overflow: hidden;

  span{
    flex: none;
    width: 64px;
    padding-top: 3px;
    background: linear-gradient(#fff, #fff) 1px 0 / 1px 3px no-repeat;
    white-space: nowrap;
  }
`;

const TerminalPanel = styled.section`
  display: flex;
  flex: none;
  padding-top: 4px;
`;

const TerminalSide = styled.header`
  display: flex;
  flex-direction: column;
  flex: none;
  width: 15px;

  h2{
    flex: 1;
    width: 13px;
    margin: 0 0 0 1px;
    padding-top: 3px;
    background: linear-gradient(to top, #bfcddb, #d7e4f2);
    font-size: 11px;
    font-weight: 400;
    line-height: 13px;
    writing-mode: vertical-rl;
    transform: rotate(180deg);
  }
`;

const TerminalMain = styled.div`
  flex: 1;
  min-width: 0;
`;

const TerminalBody = styled.div`
  display: flex;
  height: 106px;
  border-top: 1px solid #a0a0a0;
  border-left: 1px solid #a0a0a0;
  background-color: #fff;
`;

const CodeTable = styled.table`
  flex: 1;
  align-self: flex-start;
  min-width: 0;
  table-layout: fixed;
  border-collapse: separate;
  border-spacing: 0;

  th{
    height: 24px;
    padding: 0 6px;
    border-right: 1px solid #e0e0e0;
    font-weight: 400;
    text-align: left;
  }

  th:last-child{
    padding-right: 6px;
    text-align: right;
  }

  th svg{
    display: inline-block;
    margin-left: 8px;
  }

  td{
    height: 20px;
    padding: 0 3px;
    overflow: hidden;
    border: solid #c8c8c8;
    border-width: 0 1px 1px 0;
    white-space: nowrap;
  }

  td:last-child{
    border-right: 0;
    text-align: right;
  }

  tbody tr:nth-child(even){
    background-color: #e9e9e9;
  }
`;

const ScriptName = styled.span`
  display: flex;
  align-items: center;
  gap: 4px;
`;

const Stars = styled.span`
  display: flex;
  gap: 6px;
`;

export default App;
